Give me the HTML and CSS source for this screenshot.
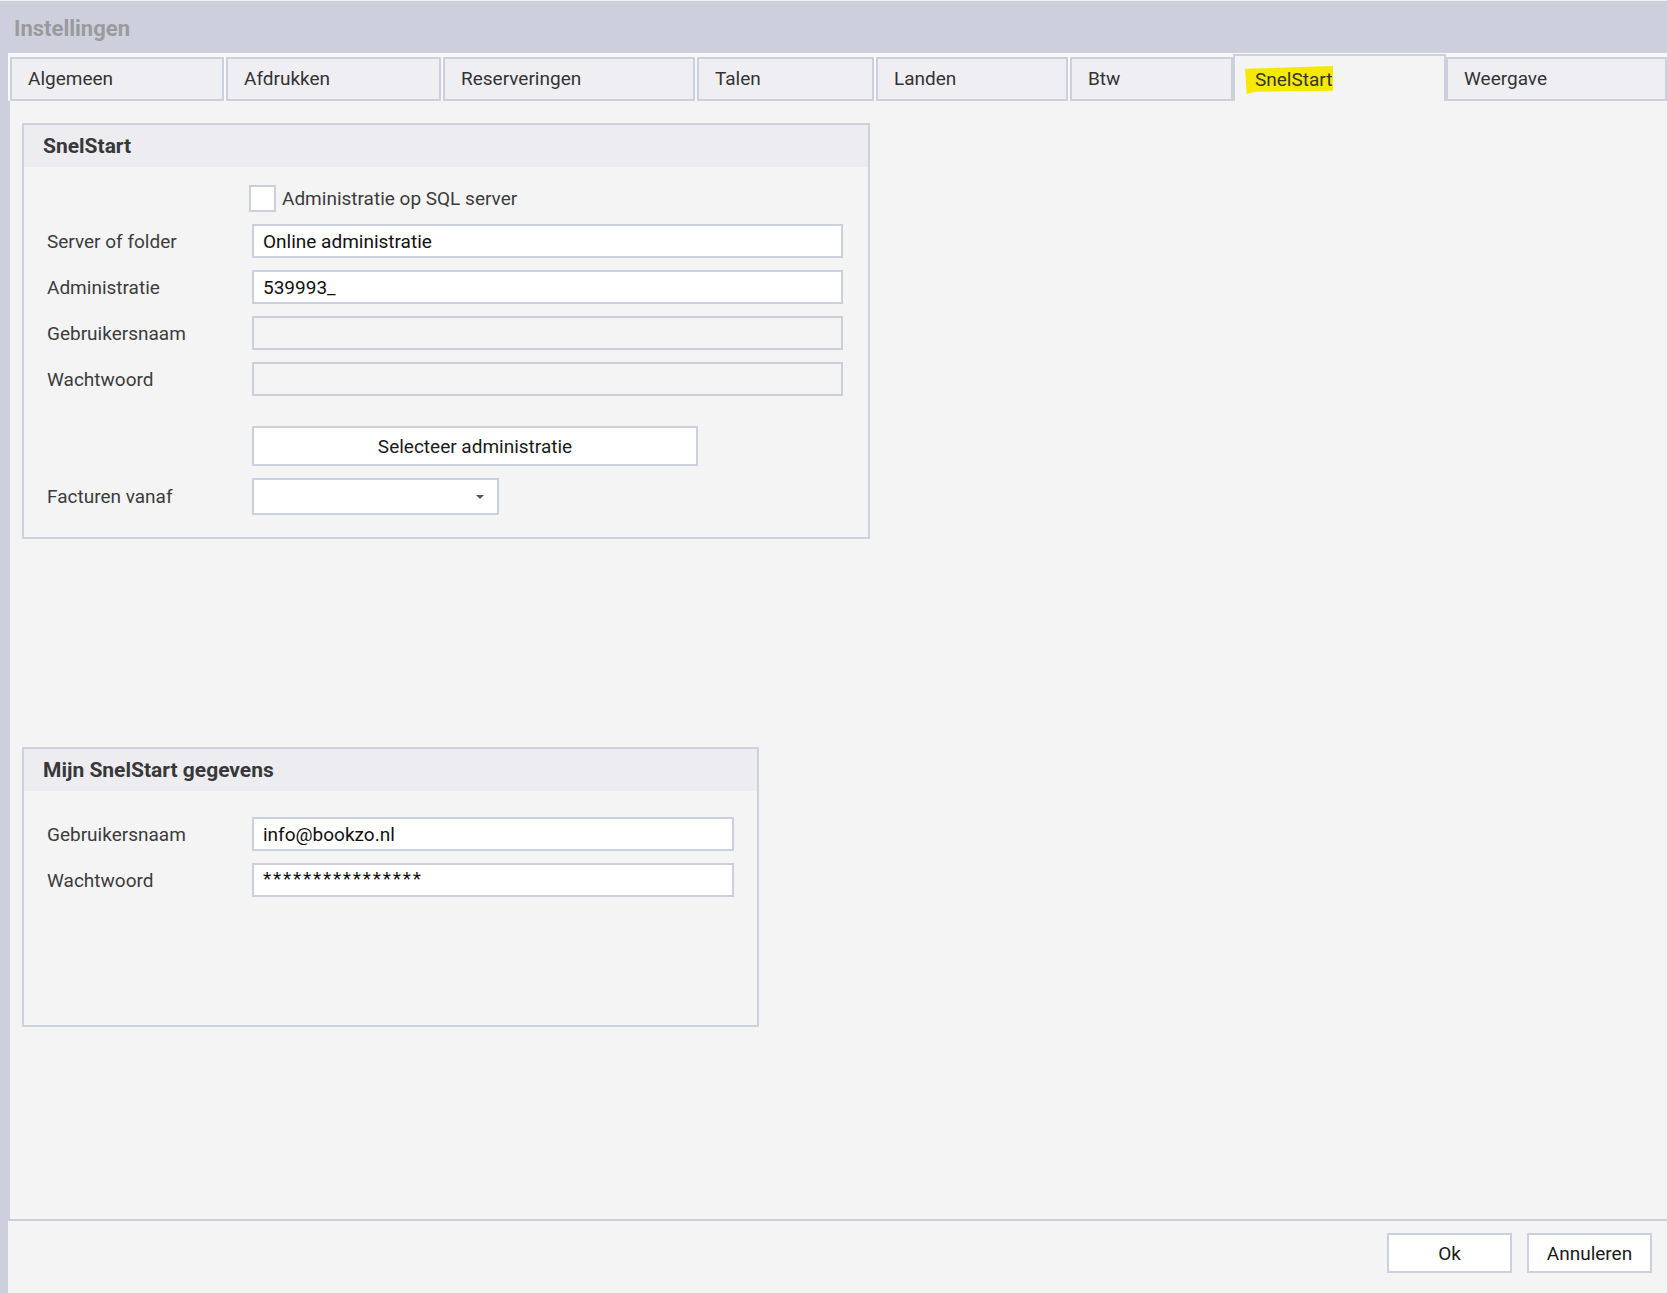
FILE: index.html
```html
<!DOCTYPE html>
<html lang="nl">
<head>
    <meta charset="UTF-8">
    <meta name="viewport" content="width=device-width, initial-scale=1.0">
    <title>Instellingen</title>
    <link rel="stylesheet" href="styles.css">
</head>
<body>
    <div class="window">
        <!-- Titelbalk -->
        <div class="titlebar">Instellingen</div>

        <div class="frame">
            <!-- Tabbladen -->
            <div class="tabstrip">
                <div class="tab">Algemeen</div>
                <div class="tab">Afdrukken</div>
                <div class="tab">Reserveringen</div>
                <div class="tab">Talen</div>
                <div class="tab">Landen</div>
                <div class="tab">Btw</div>
                <div class="tab active"><span class="marker">SnelStart</span></div>
                <div class="tab">Weergave</div>
            </div>

            <!-- Tabblad SnelStart -->
            <div class="tabpage">
                <div class="group group-snelstart">
                    <div class="group-header">SnelStart</div>
                    <div class="group-body">
                        <div class="form-row">
                            <span></span>
                            <label class="check">
                                <input type="checkbox">
                                <span>Administratie op SQL server</span>
                            </label>
                        </div>
                        <div class="form-row">
                            <span class="label">Server of folder</span>
                            <input class="field" type="text" value="Online administratie" readonly>
                        </div>
                        <div class="form-row">
                            <span class="label">Administratie</span>
                            <input class="field" type="text" value="539993_" readonly>
                        </div>
                        <div class="form-row">
                            <span class="label">Gebruikersnaam</span>
                            <input class="field" type="text" value="" disabled>
                        </div>
                        <div class="form-row">
                            <span class="label">Wachtwoord</span>
                            <input class="field" type="text" value="" disabled>
                        </div>
                        <div class="form-row row-button">
                            <span></span>
                            <button class="select-btn">Selecteer administratie</button>
                        </div>
                        <div class="form-row">
                            <span class="label">Facturen vanaf</span>
                            <div class="combo"></div>
                        </div>
                    </div>
                </div>

                <div class="group group-account">
                    <div class="group-header">Mijn SnelStart gegevens</div>
                    <div class="group-body">
                        <div class="form-row">
                            <span class="label">Gebruikersnaam</span>
                            <input class="field" type="text" value="info@bookzo.nl" readonly>
                        </div>
                        <div class="form-row">
                            <span class="label">Wachtwoord</span>
                            <input class="field password" type="text" value="****************" readonly>
                        </div>
                    </div>
                </div>
            </div>

            <!-- Knoppen -->
            <div class="footer">
                <button class="dlg-btn">Ok</button>
                <button class="dlg-btn">Annuleren</button>
            </div>
        </div>
    </div>
</body>
</html>
```

FILE: styles.css
```css
/* Basis */
* {
    margin: 0;
    padding: 0;
    box-sizing: border-box;
}

body {
    background: #cdd0dc;
    font-family: Roboto, 'Liberation Sans', sans-serif;
    font-size: 19px;
    color: #3a3a3a;
    overflow: hidden;
}

.window {
    display: flex;
    flex-direction: column;
    height: 1293px;
}

/* Titelbalk */
.titlebar {
    height: 53px;
    border-top: 1px solid #eef0f5;
    display: flex;
    align-items: center;
    padding: 2px 0 0 14px;
    font-size: 22px;
    font-weight: bold;
    color: #9a9a9e;
}

.frame {
    flex: 1;
    display: flex;
    flex-direction: column;
    margin-left: 8px;
    background: #f4f4f4;
}

/* Tabbladen */
.tabstrip {
    height: 48px;
    display: flex;
    align-items: flex-end;
    gap: 2px;
    padding-left: 2px;
    background: #f8f8fa;
    border-top: 1px solid #fbfbfd;
}

.tab {
    height: 44px;
    display: flex;
    align-items: center;
    padding: 0 0 2px 16px;
    background: #efeff3;
    border: 2px solid #cdd0dc;
    color: #333;
}

.tab:nth-child(1) { width: 214px; }
.tab:nth-child(2) { width: 215px; }
.tab:nth-child(3) { width: 252px; }
.tab:nth-child(4) { width: 177px; }
.tab:nth-child(5) { width: 192px; }
.tab:nth-child(6) { width: 163px; margin-right: -2px; }
.tab:nth-child(7) { width: 213px; margin-right: -2px; }
.tab:nth-child(8) { width: 221px; }

.tab.active {
    height: 47px;
    background: #f4f4f4;
    border-bottom: none;
    padding-left: 10px;
    padding-bottom: 0;
    padding-top: 3px;
}

.marker {
    background: #f6e900;
    padding: 2px 1px 3px 10px;
    clip-path: polygon(0 10%, 100% 0, 100% 88%, 12% 92%, 2% 100%);
}

/* Tabblad */
.tabpage {
    flex: 1;
    display: flex;
    flex-direction: column;
    align-items: flex-start;
    padding: 22px 0 0 12px;
    border-left: 2px solid #cdd0dc;
}

.group {
    border: 2px solid #cfd1de;
}

.group-snelstart {
    width: 848px;
}

.group-account {
    width: 737px;
    height: 280px;
    margin-top: 208px;
}

.group-header {
    height: 42px;
    display: flex;
    align-items: center;
    padding-left: 19px;
    background: #ededf1;
    font-size: 21px;
    font-weight: bold;
    color: #383838;
}

.group-body {
    display: flex;
    flex-direction: column;
    gap: 12px;
    padding: 18px 0 22px 23px;
}

.group-account .group-body {
    padding-top: 26px;
}

.form-row {
    display: grid;
    grid-template-columns: 205px 591px;
    align-items: center;
}

.group-account .form-row {
    grid-template-columns: 205px 482px;
}

.row-button {
    margin-top: 18px;
}

.label {
    color: #3c3c3c;
}

/* Velden */
.field {
    height: 34px;
    padding: 0 9px;
    border: 2px solid #cdd0dc;
    background: #fff;
    font-family: Roboto, 'Liberation Sans', sans-serif;
    font-size: 19px;
    color: #111;
    outline: none;
}

.field:disabled {
    background: #f4f4f4;
}

.password {
    letter-spacing: 1.8px;
    padding-bottom: 4px;
}

.check {
    display: flex;
    align-items: center;
    gap: 6px;
    margin-left: -3px;
    color: #3c3c3c;
}

.check input {
    appearance: none;
    width: 27px;
    height: 27px;
    border: 2px solid #cdd0dc;
    background: #fff;
}

.select-btn {
    width: 446px;
    height: 40px;
    border: 2px solid #cdd0dc;
    background: #fff;
    font-family: Roboto, 'Liberation Sans', sans-serif;
    font-size: 19px;
    color: #1a1a1a;
}

.combo {
    position: relative;
    width: 247px;
    height: 37px;
    border: 2px solid #cdd0dc;
    background: #fff;
}

.combo::after {
    content: "";
    position: absolute;
    right: 13px;
    top: 15px;
    border-left: 4px solid transparent;
    border-right: 4px solid transparent;
    border-top: 4px solid #555;
}

/* Knoppen onderaan */
.footer {
    height: 74px;
    display: flex;
    justify-content: flex-end;
    align-items: flex-start;
    gap: 15px;
    padding: 12px 15px 0 0;
    border-top: 2px solid #cdd0dc;
}

.dlg-btn {
    width: 125px;
    height: 40px;
    border: 2px solid #cdd0dc;
    background: #fff;
    font-family: Roboto, 'Liberation Sans', sans-serif;
    font-size: 19px;
    color: #1a1a1a;
}
```
